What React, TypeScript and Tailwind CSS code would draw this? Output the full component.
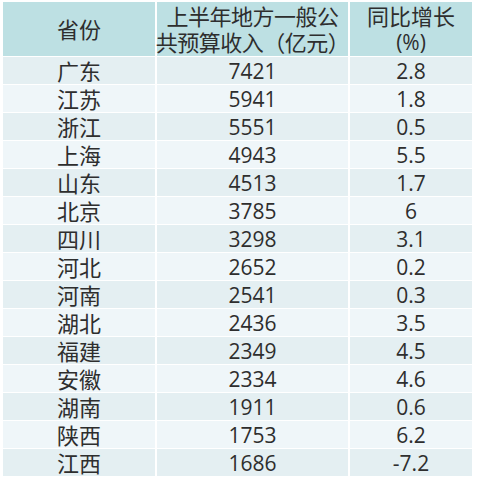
import React from 'react'

const rows: Array<[string, string, string]> = [
  ['广东', '7421', '2.8'],
  ['江苏', '5941', '1.8'],
  ['浙江', '5551', '0.5'],
  ['上海', '4943', '5.5'],
  ['山东', '4513', '1.7'],
  ['北京', '3785', '6'],
  ['四川', '3298', '3.1'],
  ['河北', '2652', '0.2'],
  ['河南', '2541', '0.3'],
  ['湖北', '2436', '3.5'],
  ['福建', '2349', '4.5'],
  ['安徽', '2334', '4.6'],
  ['湖南', '1911', '0.6'],
  ['陕西', '1753', '6.2'],
  ['江西', '1686', '-7.2'],
]

export default function App() {
  return (
    <div
      className="w-[477px] h-[477px] bg-white pl-[3px] pt-[2px] overflow-hidden text-[#2e2e2e]"
      style={{ fontFamily: '"Open Sans", "Noto Sans CJK SC", sans-serif' }}
    >
      <div className="w-[469px] flex flex-col">
        {/* header */}
        <div className="flex h-[54px] bg-[#bde0e3] text-[22px] leading-[26px]">
          <div className="w-[154px] flex items-center justify-center border-r-[2px] border-white">
            省份
          </div>
          <div className="w-[193px] flex flex-col items-center justify-center border-r-[2px] border-white whitespace-nowrap tracking-[-0.5px]">
            <span>上半年地方一般公</span>
            <span>共预算收入（亿元）</span>
          </div>
          <div className="flex-1 flex flex-col items-center justify-center">
            <span>同比增长</span>
            <span className="text-[21px]">(%)</span>
          </div>
        </div>

        {rows.map(([name, income, growth], i) => (
          <div
            key={name}
            className={`flex h-[28px] leading-[28px] border-t border-white ${
              i % 2 === 0 ? 'bg-[#e4eff2]' : 'bg-[#eff6f9]'
            }`}
          >
            <div className="w-[154px] text-center text-[22px] border-r-[2px] border-white">{name}</div>
            <div className="w-[193px] text-center text-[21px] border-r-[2px] border-white">{income}</div>
            <div className="flex-1 text-center text-[21px]">{growth}</div>
          </div>
        ))}
      </div>
    </div>
  )
}
